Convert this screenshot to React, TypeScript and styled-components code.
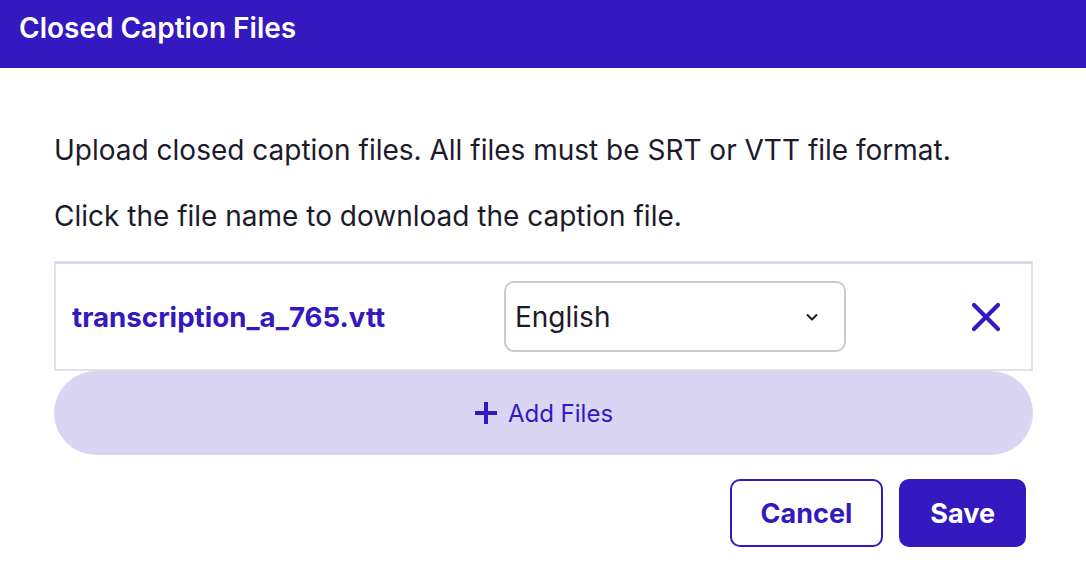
import styled, { createGlobalStyle } from "styled-components";

const GlobalStyle = createGlobalStyle`
    * {
        box-sizing: border-box;
    }

    body {
        margin: 0;
        background: #ffffff;
        font-family: Inter, "Noto Sans", sans-serif;
        color: #1c1a2b;
    }
`;

const files = [{ name: "transcription_a_765.vtt", language: "English" }];

function ChevronDown() {
    return (
        <svg width="16" height="16" viewBox="0 0 16 16" fill="none">
            <path d="M3.5 6l4.5 4.5L12.5 6" stroke="#1c1a2b" strokeWidth="2" strokeLinecap="round" strokeLinejoin="round" />
        </svg>
    );
}

function CloseIcon() {
    return (
        <svg width="30" height="30" viewBox="0 0 30 30" fill="none">
            <path d="M3 3l24 24M27 3L3 27" stroke="#3418c0" strokeWidth="4.2" strokeLinecap="round" />
        </svg>
    );
}

function PlusIcon() {
    return (
        <svg width="24" height="24" viewBox="0 0 24 24" fill="none">
            <path d="M12 1v22M1 12h22" stroke="#3418c0" strokeWidth="4" />
        </svg>
    );
}

export default function App() {
    return (
        <>
            <GlobalStyle />
            <Dialog>
                <Header>
                    <h1 className="title">Closed Caption Files</h1>
                </Header>

                <Body>
                    <Paragraph>Upload closed caption files. All files must be SRT or VTT file format.</Paragraph>
                    <Paragraph>Click the file name to download the caption file.</Paragraph>

                    <FileList>
                        {files.map((file) => (
                            <FileRow key={file.name}>
                                <FileLink href="#">{file.name}</FileLink>
                                <LanguageSelect>
                                    <span>{file.language}</span>
                                    <ChevronDown />
                                </LanguageSelect>
                                <RemoveButton type="button" aria-label="Remove file">
                                    <CloseIcon />
                                </RemoveButton>
                            </FileRow>
                        ))}
                    </FileList>

                    <AddFilesButton type="button">
                        <PlusIcon />
                        Add Files
                    </AddFilesButton>

                    <Actions>
                        <ActionButton type="button">Cancel</ActionButton>
                        <ActionButton type="button" $primary>
                            Save
                        </ActionButton>
                    </Actions>
                </Body>
            </Dialog>
        </>
    );
}

const Dialog = styled.div`
    width: 1086px;
    min-height: 574px;
    background: #ffffff;
`;

const Header = styled.header`
    height: 68px;
    background: #3418c0;
    display: flex;
    align-items: center;
    padding: 0 19px 12px;

    .title {
        margin: 0;
        color: #ffffff;
        font-size: 28px;
        font-weight: 600;
    }
`;

const Body = styled.div`
    padding: 64px 53px 0 54px;
    display: flex;
    flex-direction: column;
`;

const Paragraph = styled.p`
    margin: 0 0 30px;
    font-size: 28px;
    line-height: 36px;
    color: #1c1a2b;

    &:last-of-type {
        margin-bottom: 27px;
    }
`;

const FileList = styled.div`
    display: flex;
    flex-direction: column;
`;

const FileRow = styled.div`
    height: 110px;
    display: flex;
    align-items: center;
    border: 2px solid #e2e1e8;
    border-top: 3px solid #dcd8f0;
    padding: 0 30px 0 16px;
`;

const FileLink = styled.a`
    width: 432px;
    color: #3418c0;
    font-size: 27.7px;
    font-weight: 700;
    text-decoration: none;
`;

const LanguageSelect = styled.div`
    width: 342px;
    height: 71px;
    border: 2px solid #cbcbcb;
    border-radius: 10px;
    display: flex;
    align-items: center;
    justify-content: space-between;
    padding: 0 24px 0 9px;
    font-size: 28px;
    color: #1c1a2b;
`;

const RemoveButton = styled.button`
    margin-left: auto;
    border: none;
    background: transparent;
    padding: 0;
    display: flex;
    cursor: pointer;
`;

const AddFilesButton = styled.button`
    height: 84px;
    border: none;
    border-radius: 42px;
    background: #dad5f3;
    color: #3418c0;
    font-family: Inter, "Noto Sans", sans-serif;
    font-size: 24px;
    display: flex;
    align-items: center;
    justify-content: center;
    gap: 10px;
    cursor: pointer;
`;

const Actions = styled.div`
    display: flex;
    justify-content: flex-end;
    gap: 16px;
    margin-top: 24px;
    padding-right: 7px;
`;

const ActionButton = styled.button<{ $primary?: boolean }>`
    height: 68px;
    padding: 0 29px;
    border: 2px solid #3418c0;
    border-radius: 10px;
    background: ${(p) => (p.$primary ? "#3418c0" : "#ffffff")};
    color: ${(p) => (p.$primary ? "#ffffff" : "#3418c0")};
    font-family: Inter, "Noto Sans", sans-serif;
    font-size: 27px;
    font-weight: 700;
    cursor: pointer;
`;
